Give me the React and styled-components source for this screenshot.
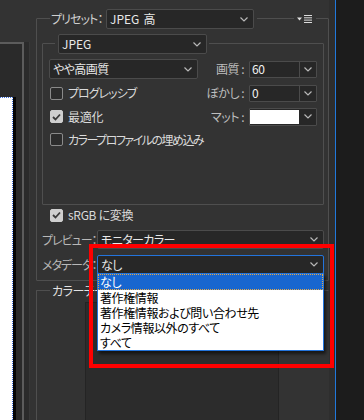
import React from "react";
import styled, { createGlobalStyle } from "styled-components";

const GlobalStyle = createGlobalStyle`
  html, body { margin: 0; padding: 0; background: #333333; }
  body {
    font-family: "Noto Sans CJK JP", "Noto Sans", sans-serif;
    font-size: 12px;
    color: #d6d6d6;
  }
  * { box-sizing: border-box; }
`;

const Screen = styled.div`
  position: relative;
  width: 364px;
  height: 420px;
  overflow: hidden;
  display: flex;
  background: #333333;
  font-feature-settings: "palt";
  line-height: 16px;
  letter-spacing: -0.5px;
`;

/* ---------- left document pane ---------- */
const LeftPane = styled.div`
  width: 30px;
  flex: none;
  display: flex;
  flex-direction: column;
`;
const LeftTop = styled.div`
  height: 42px;
  background: #333333;
`;
const LeftBody = styled.div`
  flex: 1;
  display: flex;
  background: #2b2b2b;
`;
const DocFrame = styled.div`
  width: 24px;
  display: flex;
  flex-direction: column;
  padding-top: 53px;
  background: #2a2a2a;
  border-top: 2px solid #5c5c5c;
  border-right: 2px solid #5c5c5c;
`;
const Canvas = styled.div`
  flex: 1;
  width: 13px;
  background: #ffffff;
  border-top: 1px dotted #3c6fe0;
  border-right: 1px dotted #3c6fe0;
  box-shadow: 3px 0 0 #050505;
`;
const Gutter = styled.div`
  flex: 1;
  border-right: 1px solid #383838;
`;

/* ---------- settings panel ---------- */
const Panel = styled.div`
  flex: 1;
  min-width: 0;
  padding: 18px 0 0 6px;
  display: flex;
  flex-direction: column;
`;
const Track = styled.div`
  width: 6px;
  flex: none;
  background: #2e2e2e;
`;
const BlueLine = styled.div`
  width: 1px;
  flex: none;
  background: #2179dc;
`;
const RightPane = styled.div`
  width: 28px;
  flex: none;
  background: #1c1c1c;
`;

const Group = styled.div`
  margin-top: ${(p) => p.$mt || 0}px;
  padding: 0 ${(p) => p.$pr || 0}px ${(p) => p.$pb || 0}px ${(p) => p.$pl || 0}px;
  border: 1px solid #4f4f4f;
  border-radius: 1px;
  ${(p) => p.$open && "border-right-color: transparent; border-bottom: none; flex: 1;"}
`;
const GroupHeader = styled.div`
  display: flex;
  align-items: center;
  height: ${(p) => p.$h}px;
  margin: ${(p) => -p.$h / 2}px ${(p) => p.$mr || 0}px 0 ${(p) => p.$ml || 0}px;
`;
const Legend = styled.div`
  display: flex;
  align-items: center;
  height: 100%;
  background: #333333;
  padding: 0 ${(p) => p.$pr || 0}px 0 ${(p) => p.$pl || 0}px;
  color: ${(p) => p.$color || "#d6d6d6"};
  white-space: nowrap;
`;
const HeaderFill = styled.div`
  flex: 1;
`;
const HeadLabel = styled.span`
  width: 55px;
  color: #cfcfcf;
  white-space: nowrap;
  letter-spacing: -0.9px;
`;
const MenuButton = styled.div`
  width: 22px;
  height: 100%;
  display: flex;
  align-items: center;
  justify-content: center;
  background: #333333;
`;

const SelectBox = styled.div`
  position: relative;
  display: flex;
  align-items: center;
  justify-content: space-between;
  width: ${(p) => (p.$w ? `${p.$w}px` : "100%")};
  height: ${(p) => p.$h}px;
  padding: 0 5px 0 3px;
  background: #272727;
  border: 1px solid ${(p) => (p.$focus ? "#2374dc" : "#4b4b4b")};
  border-radius: 2px;
  color: #e8e8e8;
  letter-spacing: ${(p) => (p.$ls != null ? p.$ls : -0.6)}px;
  word-spacing: ${(p) => p.$ws || 0}px;
`;
const SelectText = styled.span`
  white-space: nowrap;
  line-height: 16px;
`;
const ChevronSvg = styled.svg`
  flex: none;
  display: block;
`;

const OptionGrid = styled.div`
  margin-top: 3px;
  display: grid;
  grid-template-columns: 149px 1fr;
  grid-template-rows: 24px 24px 23px 23px;
  align-items: center;
`;
const FieldRow = styled.div`
  display: flex;
  align-items: center;
  justify-content: flex-end;
  gap: 5px;
`;
const FieldLabel = styled.span`
  color: #bdbdbd;
  white-space: nowrap;
`;
const FieldBox = styled.div`
  display: flex;
  width: 68px;
  height: ${(p) => p.$h || 17}px;
  background: #272727;
  border: 1px solid #4b4b4b;
  border-radius: 1px;
`;
const FieldValue = styled.div`
  width: 50px;
  display: flex;
  align-items: center;
  padding-left: 2px;
  border-right: 1px solid #4b4b4b;
  color: #f2f2f2;
  line-height: 14px;
`;
const Swatch = styled.div`
  width: 49px;
  margin: 1px 0;
  background: #ffffff;
`;
const FieldArrow = styled.div`
  flex: 1;
  display: flex;
  align-items: center;
  justify-content: center;
`;

const CheckRow = styled.label`
  display: flex;
  align-items: center;
  gap: 5px;
  height: ${(p) => p.$h || 23}px;
  padding-left: ${(p) => p.$pl || 1}px;
  color: #dadada;
  white-space: nowrap;
  letter-spacing: ${(p) => (p.$ls != null ? p.$ls : -1)}px;
  ${(p) => p.$span && "grid-column: 1 / span 2;"}
`;
const CheckBox = styled.span`
  width: 13px;
  height: 13px;
  flex: none;
  display: flex;
  align-items: center;
  justify-content: center;
  border: 1px solid ${(p) => (p.$checked ? "#cfcfcf" : "#8a8a8a")};
  background: ${(p) => (p.$checked ? "#cfcfcf" : "#2c2c2c")};
  border-radius: 2px;
`;

const SelectGrid = styled.div`
  margin-top: 5px;
  display: grid;
  grid-template-columns: 52px 1fr;
  column-gap: 3px;
  row-gap: 6px;
  align-items: center;
`;
const RowLabel = styled.span`
  color: #b8b8b8;
  white-space: nowrap;
  letter-spacing: -1px;
`;
const MetaWrap = styled.div`
  position: relative;
`;
const OptionList = styled.ul`
  position: absolute;
  z-index: 2;
  left: 0;
  right: 0;
  top: calc(100% - 1px);
  margin: 0;
  padding: 0;
  list-style: none;
  background: #ffffff;
  border: 1px solid #2374dc;
  box-shadow: 2px 3px 3px rgba(0, 0, 0, 0.55);
  letter-spacing: -0.4px;
`;
const OptionItem = styled.li`
  height: ${(p) => (p.$selected ? 16 : 15)}px;
  line-height: ${(p) => (p.$selected ? 16 : 15)}px;
  padding-left: 2px;
  color: ${(p) => (p.$selected ? "#ffffff" : "#000000")};
  background: ${(p) => (p.$selected ? "#1866cf" : "transparent")};
  outline: ${(p) => (p.$selected ? "1px dotted #e3a94a" : "none")};
  outline-offset: -1px;
  white-space: nowrap;
`;

const ColorTable = styled.div`
  margin: 3px 0 0 48px;
  width: 194px;
  height: 140px;
  background: #2c2c2c;
  border: 1px solid #242424;
`;

const Highlight = styled.div`
  position: absolute;
  z-index: 3;
  left: 89px;
  top: 244px;
  width: 245px;
  height: 124px;
  border: 4px solid #ff0000;
  pointer-events: none;
`;

/* ---------- small drawings ---------- */
function Chevron() {
  return (
    <ChevronSvg width="8" height="5" viewBox="0 0 8 5">
      <polyline points="0.5,0.5 4,4 7.5,0.5" fill="none" stroke="#b8b8b8" strokeWidth="1.2" />
    </ChevronSvg>
  );
}

function MenuIcon() {
  return (
    <svg width="16" height="8" viewBox="0 0 16 8" style={{ display: "block" }}>
      <polygon points="0,2.5 5,2.5 2.5,5.5" fill="#e0e0e0" />
      <rect x="7" y="0" width="8" height="1" fill="#dcdcdc" />
      <rect x="7" y="2.3" width="8" height="1" fill="#dcdcdc" />
      <rect x="7" y="4.6" width="8" height="1" fill="#dcdcdc" />
      <rect x="7" y="7" width="8" height="1" fill="#dcdcdc" />
    </svg>
  );
}

function Select({ value, w, h = 20, focus, ls, ws }) {
  return (
    <SelectBox $w={w} $h={h} $focus={focus} $ls={ls} $ws={ws}>
      <SelectText>{value}</SelectText>
      <Chevron />
    </SelectBox>
  );
}

function Check({ checked }) {
  return (
    <CheckBox $checked={checked}>
      {checked && (
        <svg width="9" height="8" viewBox="0 0 9 8">
          <polyline points="1,4 3.5,6.5 8,1.5" fill="none" stroke="#3a3a3a" strokeWidth="1.8" />
        </svg>
      )}
    </CheckBox>
  );
}

function Field({ label, value, swatch }) {
  return (
    <FieldRow>
      <FieldLabel>{label}</FieldLabel>
      <FieldBox $h={swatch ? 18 : 17}>
        {swatch ? <Swatch /> : <FieldValue>{value}</FieldValue>}
        <FieldArrow>
          <Chevron />
        </FieldArrow>
      </FieldBox>
    </FieldRow>
  );
}

const metaOptions = [
  "なし",
  "著作権情報",
  "著作権情報および問い合わせ先",
  "カメラ情報以外のすべて",
  "すべて",
];

export default function App() {
  return (
    <>
      <GlobalStyle />
      <Screen>
        <LeftPane>
          <LeftTop />
          <LeftBody>
            <DocFrame>
              <Canvas />
            </DocFrame>
            <Gutter />
          </LeftBody>
        </LeftPane>

        <Panel>
          <Group $pl={5} $pr={4} $pb={6}>
            <GroupHeader $h={20} $ml={8} $mr={8}>
              <Legend $pl={1} $pr={3}>
                <HeadLabel>プリセット：</HeadLabel>
                <Select w={148} h={20} value="JPEG 高" ls={0} ws={1.5} />
              </Legend>
              <HeaderFill />
              <MenuButton>
                <MenuIcon />
              </MenuButton>
            </GroupHeader>

            <Group $mt={14} $pl={6} $pr={6} $pb={53}>
              <GroupHeader $h={20} $ml={6}>
                <Legend $pl={3} $pr={2}>
                  <Select w={149} h={20} value="JPEG" ls={0} />
                </Legend>
              </GroupHeader>
              <OptionGrid>
                <Select w={149} h={20} value="やや高画質" />
                <Field label="画質 :" value="60" />
                <CheckRow>
                  <Check />
                  プログレッシブ
                </CheckRow>
                <Field label="ぼかし :" value="0" />
                <CheckRow $ls={-0.3}>
                  <Check checked />
                  最適化
                </CheckRow>
                <Field label="マット :" swatch />
                <CheckRow $span $ls={-1.5}>
                  <Check />
                  カラープロファイルの埋め込み
                </CheckRow>
              </OptionGrid>
            </Group>

            <CheckRow $h={20} $pl={8} $ls={-0.3}>
              <Check checked />
              sRGB に変換
            </CheckRow>

            <SelectGrid>
              <RowLabel>プレビュー：</RowLabel>
              <Select h={19} value="モニターカラー" />
              <RowLabel>メタデータ：</RowLabel>
              <MetaWrap>
                <Select h={19} focus value="なし" />
                <OptionList>
                  {metaOptions.map((o, i) => (
                    <OptionItem key={o} $selected={i === 0}>
                      {o}
                    </OptionItem>
                  ))}
                </OptionList>
              </MetaWrap>
            </SelectGrid>
          </Group>

          <Group $mt={9} $open>
            <GroupHeader $h={16} $ml={13}>
              <Legend $pl={2} $pr={2} $color="#e2e2e2">
                カラーテーブル
              </Legend>
            </GroupHeader>
            <ColorTable />
          </Group>
        </Panel>

        <Track />
        <BlueLine />
        <RightPane />
        <Highlight />
      </Screen>
    </>
  );
}
